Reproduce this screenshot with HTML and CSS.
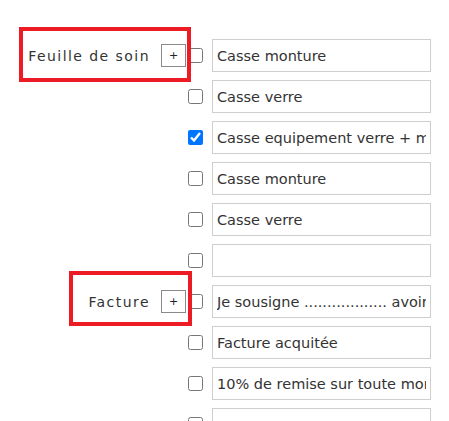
FILE: index.html
```html
<!DOCTYPE html>
<html lang="fr">
<head>
<meta charset="utf-8">
<link rel="stylesheet" href="styles.css">
</head>
<body>
<div class="page">
  <div class="row">
    <div class="label"><span class="label-text">Feuille de soin</span><button class="add">+</button></div>
    <input type="checkbox" class="check">
    <input type="text" class="field" value="Casse monture">
  </div>
  <div class="row">
    <div class="label"></div>
    <input type="checkbox" class="check">
    <input type="text" class="field" value="Casse verre">
  </div>
  <div class="row">
    <div class="label"></div>
    <input type="checkbox" class="check" checked>
    <input type="text" class="field" value="Casse equipement verre + monture">
  </div>
  <div class="row">
    <div class="label"></div>
    <input type="checkbox" class="check">
    <input type="text" class="field" value="Casse monture">
  </div>
  <div class="row">
    <div class="label"></div>
    <input type="checkbox" class="check">
    <input type="text" class="field" value="Casse verre">
  </div>
  <div class="row">
    <div class="label"></div>
    <input type="checkbox" class="check">
    <input type="text" class="field" value="">
  </div>
  <div class="row">
    <div class="label"><span class="label-text">Facture</span><button class="add">+</button></div>
    <input type="checkbox" class="check">
    <input type="text" class="field" value="Je sousigne .................. avoir reçu la somme de">
  </div>
  <div class="row">
    <div class="label"></div>
    <input type="checkbox" class="check">
    <input type="text" class="field" value="Facture acquitée">
  </div>
  <div class="row">
    <div class="label"></div>
    <input type="checkbox" class="check">
    <input type="text" class="field" value="10% de remise sur toute monture">
  </div>
  <div class="row">
    <div class="label"></div>
    <input type="checkbox" class="check">
    <input type="text" class="field" value="">
  </div>
  <div class="mark mark-soin"></div>
  <div class="mark mark-facture"></div>
</div>
</body>
</html>
```
FILE: styles.css
```css
html, body {
  margin: 0;
  padding: 0;
  background: #fff;
  overflow: hidden;
}
body {
  font-family: "DejaVu Sans", "Noto Sans", sans-serif;
  color: #333;
}
.page {
  position: relative;
  height: 421px;
  padding-top: 39px;
  box-sizing: border-box;
  display: flex;
  flex-direction: column;
  gap: 8px;
}
.row {
  display: flex;
  align-items: center;
  height: 33px;
  flex: none;
}
.label {
  width: 186px;
  display: flex;
  justify-content: flex-end;
  align-items: center;
  gap: 11px;
}
.label-text {
  font-size: 14px;
  letter-spacing: 1.45px;
  color: #333;
}
.add {
  width: 25px;
  height: 23px;
  margin: 0;
  padding: 0;
  border: 1px solid #8a8a8a;
  background: #fff;
  color: #222;
  font-family: "DejaVu Sans", sans-serif;
  font-size: 11px;
  line-height: 20px;
  text-align: center;
}
.check {
  width: 15px;
  height: 15px;
  margin: 0 9px 0 2px;
  flex: none;
}
.field {
  width: 219px;
  height: 33px;
  box-sizing: border-box;
  margin: 0;
  padding: 0 4px;
  border: 1px solid #cfcfcf;
  font-family: "DejaVu Sans", "Noto Sans", sans-serif;
  font-size: 14.5px;
  color: #333;
  background: #fff;
  flex: none;
}
.mark {
  position: absolute;
  border: 4px solid #ed1c24;
  box-sizing: border-box;
  pointer-events: none;
}
.mark-soin {
  left: 19px;
  top: 27px;
  width: 172px;
  height: 55px;
}
.mark-facture {
  left: 69px;
  top: 271px;
  width: 123px;
  height: 55px;
}
```
